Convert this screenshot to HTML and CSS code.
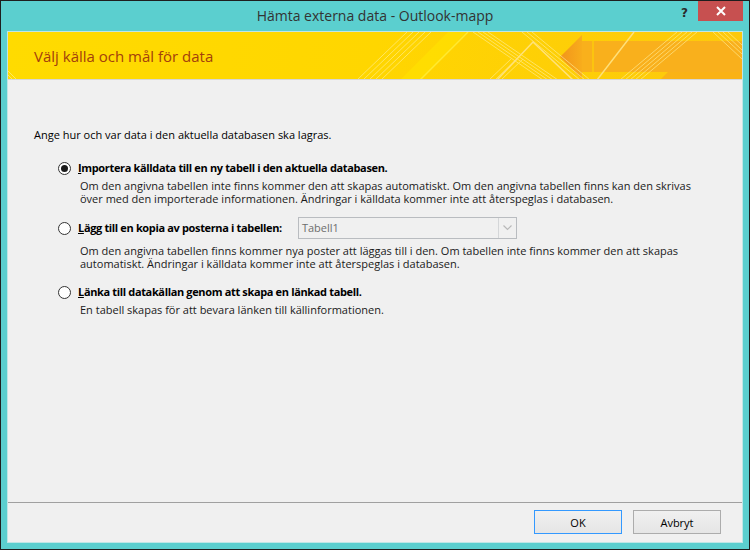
FILE: index.html
```html
<!DOCTYPE html>
<html lang="sv">
<head>
    <meta charset="UTF-8">
    <title>Hämta externa data - Outlook-mapp</title>
    <link rel="stylesheet" href="styles.css">
</head>
<body>

    <div class="window">
        <div class="titlebar">
            <span class="title">Hämta externa data - Outlook-mapp</span>
            <div class="caption-buttons">
                <span class="help">?</span>
                <span class="close">
                    <svg width="10" height="10" viewBox="0 0 10 10">
                        <path d="M1 1 L9 9 M9 1 L1 9" stroke="#fff" stroke-width="2"/>
                    </svg>
                </span>
            </div>
        </div>

        <div class="client">
            <div class="banner">
                <svg class="banner-art" width="734" height="48" viewBox="0 0 734 48">
                    <defs>
                        <linearGradient id="headGrad" x1="0" y1="0" x2="1" y2="0">
                            <stop offset="0" stop-color="#f2941b"/>
                            <stop offset="1" stop-color="#f8ad1c"/>
                        </linearGradient>
                    </defs>
                    <!-- brighter wedge -->
                    <polygon points="392,48 412,48 458,0 440,0" fill="#ffe600" opacity="0.5"/>
                    <!-- arrow -->
                    <polygon points="552,25 574,3 574,47" fill="url(#headGrad)"/>
                    <rect x="574" y="9" width="160" height="31" fill="#f9b01c"/>
                    <polygon points="652,48 734,48 734,40 660,40" fill="#f8a81b" opacity="0.7"/>
                    <line x1="585" y1="9" x2="585" y2="40" stroke="#fcc40f" stroke-width="2"/>
                    <!-- stripe bundles -->
                    <g stroke="#fff1a0" stroke-width="1" opacity="0.6" fill="none">
                        <path d="M399 0 L349 48 M405 0 L355 48 M411 0 L361 48 M417 0 L367 48 M423 0 L373 48"/>
                        <path d="M465 0 L535 48 M470 0 L540 48 M475 0 L545 48 M480 0 L550 48"/>
                        <path d="M514 0 L572 48 M519 0 L577 48 M524 0 L582 48"/>
                        <path d="M503 27 L481 48 M509 27 L487 48 M515 27 L493 48"/>
                        <path d="M612 48 L669 0 M617 48 L674 0 M622 48 L679 0 M627 48 L684 0 M632 48 L689 0"/>
                        <path d="M705 0 L734 27 M710 0 L734 22 M715 0 L734 18 M720 0 L734 13"/>
                    </g>
                    <path d="M460 0 L412 48" stroke="#ffea30" stroke-width="1.5" fill="none"/>
                    <path d="M489 48 L525 10 L565 48" stroke="#ffe27a" stroke-width="1.5" fill="none"/>
                    <path d="M589 48 L626 0" stroke="#ffe07a" stroke-width="1.5" fill="none"/>
                    <path d="M0 39 L9 48 M0 43 L5 48" stroke="#fff3a0" opacity="0.6"/>
                </svg>
                <h1>Välj källa och mål för data</h1>
            </div>

            <div class="content">
                <p class="intro">Ange hur och var data i den aktuella databasen ska lagras.</p>

                <div class="option first">
                    <div class="option-row">
                        <span class="radio checked"></span>
                        <span class="option-label"><u>I</u>mportera källdata till en ny tabell i den aktuella databasen.</span>
                    </div>
                    <p class="desc">Om den angivna tabellen inte finns kommer den att skapas automatiskt. Om den angivna tabellen finns kan den skrivas<br>över med den importerade informationen. Ändringar i källdata kommer inte att återspeglas i databasen.</p>
                </div>

                <div class="option">
                    <div class="option-row">
                        <span class="radio"></span>
                        <span class="option-label"><u>L</u>ägg till en kopia av posterna i tabellen:</span>
                        <div class="combo">
                            <span class="combo-text">Tabell1</span>
                            <span class="combo-arrow">
                                <svg width="9" height="6" viewBox="0 0 9 6">
                                    <path d="M0.5 0.5 L4.5 4.5 L8.5 0.5" stroke="#b8b8b8" stroke-width="1.2" fill="none"/>
                                </svg>
                            </span>
                        </div>
                    </div>
                    <p class="desc combo-desc">Om den angivna tabellen finns kommer nya poster att läggas till i den. Om tabellen inte finns kommer den att skapas<br>automatiskt. Ändringar i källdata kommer inte att återspeglas i databasen.</p>
                </div>

                <div class="option last">
                    <div class="option-row">
                        <span class="radio"></span>
                        <span class="option-label"><u>L</u>änka till datakällan genom att skapa en länkad tabell.</span>
                    </div>
                    <p class="desc">En tabell skapas för att bevara länken till källinformationen.</p>
                </div>
            </div>

            <div class="footer">
                <button class="btn btn-default">OK</button>
                <button class="btn">Avbryt</button>
            </div>
        </div>
    </div>

</body>
</html>
```

FILE: styles.css
```css
*, *::before, *::after {
    box-sizing: border-box;
    margin: 0;
    padding: 0;
}

html, body {
    width: 750px;
    height: 550px;
    overflow: hidden;
    font-family: "Open Sans", "Noto Sans", sans-serif;
    background: #5bcfcf;
}

.window {
    width: 750px;
    height: 550px;
    border: 1px solid #1e1e1e;
    background-color: #5bcfcf;
    padding: 0 6px 6px 6px;
    display: flex;
    flex-direction: column;
}

.titlebar {
    position: relative;
    height: 30px;
    flex-shrink: 0;
    text-align: center;
}

.title {
    display: inline-block;
    font-size: 14px;
    line-height: 30px;
    color: #333;
}

.caption-buttons {
    position: absolute;
    top: 0;
    right: 0;
    display: flex;
    align-items: flex-start;
}

.help {
    font-family: "DejaVu Sans", sans-serif;
    font-weight: bold;
    font-size: 12px;
    line-height: 14px;
    color: #2a2a2a;
    margin-top: 5px;
    margin-right: 10px;
}

.close {
    width: 45px;
    height: 20px;
    background-color: #c75050;
    display: flex;
    align-items: center;
    justify-content: center;
}

.client {
    flex: 1;
    border: 1px solid #bfe6e6;
    background-color: #f0f0f0;
    display: flex;
    flex-direction: column;
}

.banner {
    position: relative;
    height: 48px;
    flex-shrink: 0;
    background: linear-gradient(100deg, #ffdb00 0%, #ffd600 50%, #fdc80d 100%);
    border-bottom: 1px solid #d6d6d6;
    display: flex;
    align-items: center;
    padding-left: 26px;
    overflow: hidden;
}

.banner-art {
    position: absolute;
    top: 0;
    left: 0;
}

.banner h1 {
    position: relative;
    font-size: 15px;
    font-weight: normal;
    color: #a3400c;
    margin-top: 1px;
}

.content {
    flex: 1;
    padding: 47px 26px 0 26px;
    font-size: 11px;
    color: #000;
}

.intro {
    line-height: 16px;
}

.option {
    margin-top: 12px;
    padding-left: 24px;
}

.option.first {
    margin-top: 17px;
}

.option.last {
    margin-top: 14px;
}

.option-row {
    display: flex;
    align-items: center;
    min-height: 16px;
}

.radio {
    width: 13px;
    height: 13px;
    border: 1px solid #333;
    border-radius: 50%;
    background-color: #fff;
    margin-right: 7px;
    display: flex;
    align-items: center;
    justify-content: center;
    flex-shrink: 0;
}

.radio.checked::after {
    content: "";
    width: 7px;
    height: 7px;
    border-radius: 50%;
    background-color: #1a1a1a;
}

.option-label {
    font-weight: bold;
    line-height: 16px;
    letter-spacing: -0.35px;
}

.desc {
    padding-left: 22px;
    margin-top: 3px;
    line-height: 13px;
    white-space: nowrap;
    color: #1a1a1a;
}

.desc.combo-desc {
    margin-top: 5px;
}

.combo {
    margin-left: 16px;
    width: 219px;
    height: 22px;
    border: 1px solid #b9bcc0;
    background-color: #f0f0f0;
    display: flex;
    align-items: stretch;
}

.combo-text {
    flex: 1;
    line-height: 20px;
    padding-left: 3px;
    color: #6d6d6d;
}

.combo-arrow {
    width: 18px;
    border-left: 1px solid #d4d6d8;
    display: flex;
    align-items: center;
    justify-content: center;
}

.footer {
    height: 40px;
    flex-shrink: 0;
    border-top: 1px solid #a0a0a0;
    display: flex;
    justify-content: flex-end;
    align-items: flex-start;
    gap: 11px;
    padding: 7px 21px 0 0;
}

.btn {
    width: 88px;
    height: 24px;
    font-family: "Open Sans", "Noto Sans", sans-serif;
    font-size: 11px;
    color: #000;
    border: 1px solid #acacac;
    background: linear-gradient(#f0f0f0, #e5e5e5);
}

.btn-default {
    border-color: #3399ff;
}
```
